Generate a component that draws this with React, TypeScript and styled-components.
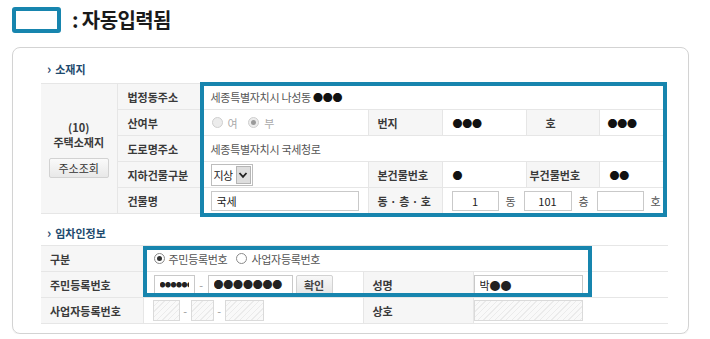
import React from 'react';
import styled, { createGlobalStyle, css } from 'styled-components';

const HIGHLIGHT = '#1785ae';

const GlobalStyle = createGlobalStyle`
  html, body {
    margin: 0;
    padding: 0;
    background: #fff;
  }
  body {
    font-family: "Noto Sans CJK KR", "Noto Sans", sans-serif;
    color: #333;
  }
  * {
    box-sizing: border-box;
  }
`;

const Page = styled.div`
  width: 710px;
  padding: 7px 0 0 12px;
`;

const Legend = styled.div`
  display: flex;
  align-items: center;
  gap: 11px;
  height: 26px;
`;

const LegendSwatch = styled.div`
  width: 49px;
  height: 26px;
  border: 4px solid ${HIGHLIGHT};
  border-radius: 3px;
  background: #fff;
`;

const LegendText = styled.div`
  font-size: 20px;
  font-weight: 700;
  color: #1a1a1a;
  letter-spacing: -0.6px;
  line-height: 26px;
`;

const Card = styled.div`
  margin-top: 14px;
  width: 677px;
  height: 287px;
  border: 1px solid #d3d3d3;
  border-radius: 8px;
  padding-left: 28px;
  box-shadow: 0 1px 1px rgba(0, 0, 0, 0.06);
`;

const SectionTitle = styled.h3<{ $top: number; $bottom: number }>`
  margin: 0 0 ${({ $bottom }) => $bottom}px;
  padding: ${({ $top }) => $top}px 0 0 6px;
  font-size: 11px;
  line-height: 14px;
  font-weight: 700;
  color: #1d4a6e;
  display: flex;
  align-items: center;
`;

const Chevron = styled.span`
  font-size: 13px;
  font-weight: 700;
  margin-right: 4px;
  line-height: 14px;
`;

const TableWrap = styled.div<{ $width: number }>`
  position: relative;
  width: ${({ $width }) => $width}px;
`;

const Grid = styled.table`
  width: 100%;
  border-collapse: collapse;
  table-layout: fixed;
  font-size: 11px;
  border-top: 1px solid #e3e3e3;
  border-left: hidden;
  border-right: hidden;
`;

const Row = styled.tr`
  height: 26px;
`;

const Th = styled.th<{ $pad?: number }>`
  background: #f6f6f6;
  border: 1px solid #e6e6e6;
  padding: 0 0 0 ${({ $pad }) => $pad ?? 9}px;
  text-align: left;
  font-weight: 700;
  color: #3a3a3a;
  white-space: nowrap;
`;

const Td = styled.td<{ $pad?: number }>`
  background: #fff;
  border: 1px solid #e6e6e6;
  padding: 0 0 0 ${({ $pad }) => $pad ?? 9}px;
  color: #555;
  white-space: nowrap;
  letter-spacing: -0.3px;
`;

const PlaceCell = styled.th`
  background: #f6f6f6;
  border: 1px solid #e6e6e6;
  padding: 0;
  text-align: center;
  vertical-align: middle;
  font-weight: 700;
  color: #3a3a3a;
  line-height: 15px;
`;

const PlaceButton = styled.button`
  display: block;
  margin: 8px auto 0;
  width: 60px;
  height: 20px;
  padding: 0;
  border: 1px solid #d2d2d2;
  border-radius: 2px;
  background: linear-gradient(#fafafa, #e8e8e8);
  font-family: inherit;
  font-size: 11px;
  color: #333;
`;

const Dots = styled.span<{ $size?: number }>`
  font-size: ${({ $size }) => $size ?? 10}px;
  color: #111;
  letter-spacing: -0.3px;
`;

const Inline = styled.div<{ $gap?: number }>`
  display: flex;
  align-items: center;
  gap: ${({ $gap }) => $gap ?? 4}px;
`;

const RadioDot = styled.span<{ $checked?: boolean; $disabled?: boolean }>`
  position: relative;
  display: inline-block;
  width: 11px;
  height: 11px;
  border-radius: 50%;
  border: 1px solid ${({ $disabled }) => ($disabled ? '#cfcfcf' : '#8a8a8a')};
  background: ${({ $disabled }) => ($disabled ? '#ececec' : '#fff')};
  ${({ $checked, $disabled }) =>
    $checked &&
    css`
      &::after {
        content: '';
        position: absolute;
        left: 2px;
        top: 2px;
        width: 5px;
        height: 5px;
        border-radius: 50%;
        background: ${$disabled ? '#9a9a9a' : '#333'};
      }
    `}
`;

const RadioLabel = styled.span<{ $disabled?: boolean }>`
  color: ${({ $disabled }) => ($disabled ? '#aaa' : '#555')};
  margin-right: ${({ $disabled }) => ($disabled ? 6 : 5)}px;
`;

const Field = styled.input<{
  $w: number;
  $h?: number;
  $center?: boolean;
  $size?: number;
  $spacing?: number;
  $hatched?: boolean;
}>`
  width: ${({ $w }) => $w}px;
  height: ${({ $h }) => $h ?? 20}px;
  margin: 0;
  padding: 0 5px;
  border: 1px solid #c9c9c9;
  background: #fff;
  outline: none;
  font-family: inherit;
  font-size: ${({ $size }) => $size ?? 11}px;
  letter-spacing: ${({ $spacing }) => $spacing ?? 0}px;
  color: #222;
  text-align: ${({ $center }) => ($center ? 'center' : 'left')};
  ${({ $hatched }) =>
    $hatched &&
    css`
      border-color: #dadada;
      background: repeating-linear-gradient(135deg, #f9f9f9 0 3px, #ebebeb 3px 4px);
    `}
`;

const Dash = styled.span`
  color: #999;
  width: 5px;
  text-align: center;
`;

const Unit = styled.span`
  color: #555;
  width: 11px;
`;

const ConfirmButton = styled.button`
  width: 37px;
  height: 20px;
  padding: 0;
  margin-left: -1px;
  border: 1px solid #d2d2d2;
  border-radius: 2px;
  background: linear-gradient(#f8f8f8, #e6e6e6);
  font-family: inherit;
  font-size: 11px;
  font-weight: 700;
  color: #444;
`;

const SelectBox = styled.div`
  display: inline-flex;
  align-items: center;
  width: 42px;
  height: 22px;
  border: 1px solid #bdbdbd;
  background: #fff;
`;

const SelectText = styled.span`
  flex: 1;
  padding-left: 2px;
  color: #222;
  font-size: 11px;
  letter-spacing: -0.5px;
`;

const SelectArrow = styled.span`
  display: flex;
  align-items: center;
  justify-content: center;
  width: 15px;
  height: 18px;
  margin-right: 1px;
  border: 1px solid #b5b5b5;
  background: #dedede;
`;

const Highlight = styled.div<{ $left: number; $top: number; $w: number; $h: number }>`
  position: absolute;
  left: ${({ $left }) => $left}px;
  top: ${({ $top }) => $top}px;
  width: ${({ $w }) => $w}px;
  height: ${({ $h }) => $h}px;
  border: 4px solid ${HIGHLIGHT};
  pointer-events: none;
`;

const Radio = ({ label, checked, disabled }: { label: string; checked?: boolean; disabled?: boolean }) => (
  <>
    <RadioDot $checked={checked} $disabled={disabled} />
    <RadioLabel $disabled={disabled}>{label}</RadioLabel>
  </>
);

const App: React.FC = () => {
  return (
    <Page>
      <GlobalStyle />
      <Legend>
        <LegendSwatch />
        <LegendText>: 자동입력됨</LegendText>
      </Legend>

      <Card>
        <SectionTitle $top={14} $bottom={7}>
          <Chevron>›</Chevron>소재지
        </SectionTitle>
        <TableWrap $width={622}>
          <Grid>
            <colgroup>
              <col style={{ width: 76 }} />
              <col style={{ width: 84 }} />
              <col style={{ width: 167 }} />
              <col style={{ width: 74 }} />
              <col style={{ width: 84 }} />
              <col style={{ width: 73 }} />
              <col style={{ width: 64 }} />
            </colgroup>
            <tbody>
              <Row>
                <PlaceCell rowSpan={5}>
                  (10)
                  <br />
                  주택소재지
                  <PlaceButton>주소조회</PlaceButton>
                </PlaceCell>
                <Th $pad={10}>법정동주소</Th>
                <Td colSpan={5}>
                  세종특별자치시 나성동 <Dots>●●●</Dots>
                </Td>
              </Row>
              <Row>
                <Th $pad={10}>산여부</Th>
                <Td $pad={10}>
                  <Inline $gap={5}>
                    <Radio label="여" disabled />
                    <Radio label="부" checked disabled />
                  </Inline>
                </Td>
                <Th>번지</Th>
                <Td $pad={10}>
                  <Dots>●●●</Dots>
                </Td>
                <Th $pad={19}>호</Th>
                <Td $pad={8}>
                  <Dots>●●●</Dots>
                </Td>
              </Row>
              <Row>
                <Th $pad={10}>도로명주소</Th>
                <Td colSpan={5}>세종특별자치시 국세청로</Td>
              </Row>
              <Row>
                <Th $pad={10}>지하건물구분</Th>
                <Td>
                  <SelectBox>
                    <SelectText>지상</SelectText>
                    <SelectArrow>
                      <svg width="10" height="8" viewBox="0 0 10 8">
                        <polyline points="1.5,2 5,5.8 8.5,2" fill="none" stroke="#222" strokeWidth="1.8" />
                      </svg>
                    </SelectArrow>
                  </SelectBox>
                </Td>
                <Th>본건물번호</Th>
                <Td $pad={10}>
                  <Dots>●</Dots>
                </Td>
                <Th $pad={3}>부건물번호</Th>
                <Td $pad={10}>
                  <Dots>●●</Dots>
                </Td>
              </Row>
              <Row>
                <Th $pad={10}>건물명</Th>
                <Td>
                  <Field $w={148} readOnly value="국세" />
                </Td>
                <Th>동 · 층 · 호</Th>
                <Td colSpan={3}>
                  <Inline $gap={7}>
                    <Field $w={47} $center readOnly value="1" />
                    <Unit>동</Unit>
                    <Field $w={48} $center readOnly value="101" />
                    <Unit>층</Unit>
                    <Field $w={47} $center readOnly value="" />
                    <Unit>호</Unit>
                  </Inline>
                </Td>
              </Row>
            </tbody>
          </Grid>
          <Highlight $left={159} $top={-1} $w={467} $h={135} />
        </TableWrap>

        <SectionTitle $top={12} $bottom={5}>
          <Chevron>›</Chevron>임차인정보
        </SectionTitle>
        <TableWrap $width={627}>
          <Grid>
            <colgroup>
              <col style={{ width: 102 }} />
              <col style={{ width: 220 }} />
              <col style={{ width: 110 }} />
              <col style={{ width: 195 }} />
            </colgroup>
            <tbody>
              <Row>
                <Th>구분</Th>
                <Td colSpan={3} $pad={10}>
                  <Inline $gap={4}>
                    <Radio label="주민등록번호" checked />
                    <Radio label="사업자등록번호" />
                  </Inline>
                </Td>
              </Row>
              <Row>
                <Th>주민등록번호</Th>
                <Td $pad={10}>
                  <Inline $gap={4}>
                    <Field $w={41} $size={6} $spacing={-0.5} readOnly value="●●●●●●" />
                    <Dash>-</Dash>
                    <Field $w={85} $size={10} $spacing={-0.2} readOnly value="●●●●●●●" />
                    <ConfirmButton>확인</ConfirmButton>
                  </Inline>
                </Td>
                <Th>성명</Th>
                <Td $pad={0}>
                  <Field $w={109} readOnly value="박●●" />
                </Td>
              </Row>
              <Row>
                <Th>사업자등록번호</Th>
                <Td>
                  <Inline $gap={3}>
                    <Field $w={27} $h={21} $hatched readOnly value="" />
                    <Dash>-</Dash>
                    <Field $w={23} $h={21} $hatched readOnly value="" />
                    <Dash>-</Dash>
                    <Field $w={39} $h={21} $hatched readOnly value="" />
                  </Inline>
                </Td>
                <Th>상호</Th>
                <Td $pad={0}>
                  <Field $w={109} $h={21} $hatched readOnly value="" />
                </Td>
              </Row>
            </tbody>
          </Grid>
          <Highlight $left={102} $top={1} $w={449} $h={51} />
        </TableWrap>
      </Card>
    </Page>
  );
};

export default App;
